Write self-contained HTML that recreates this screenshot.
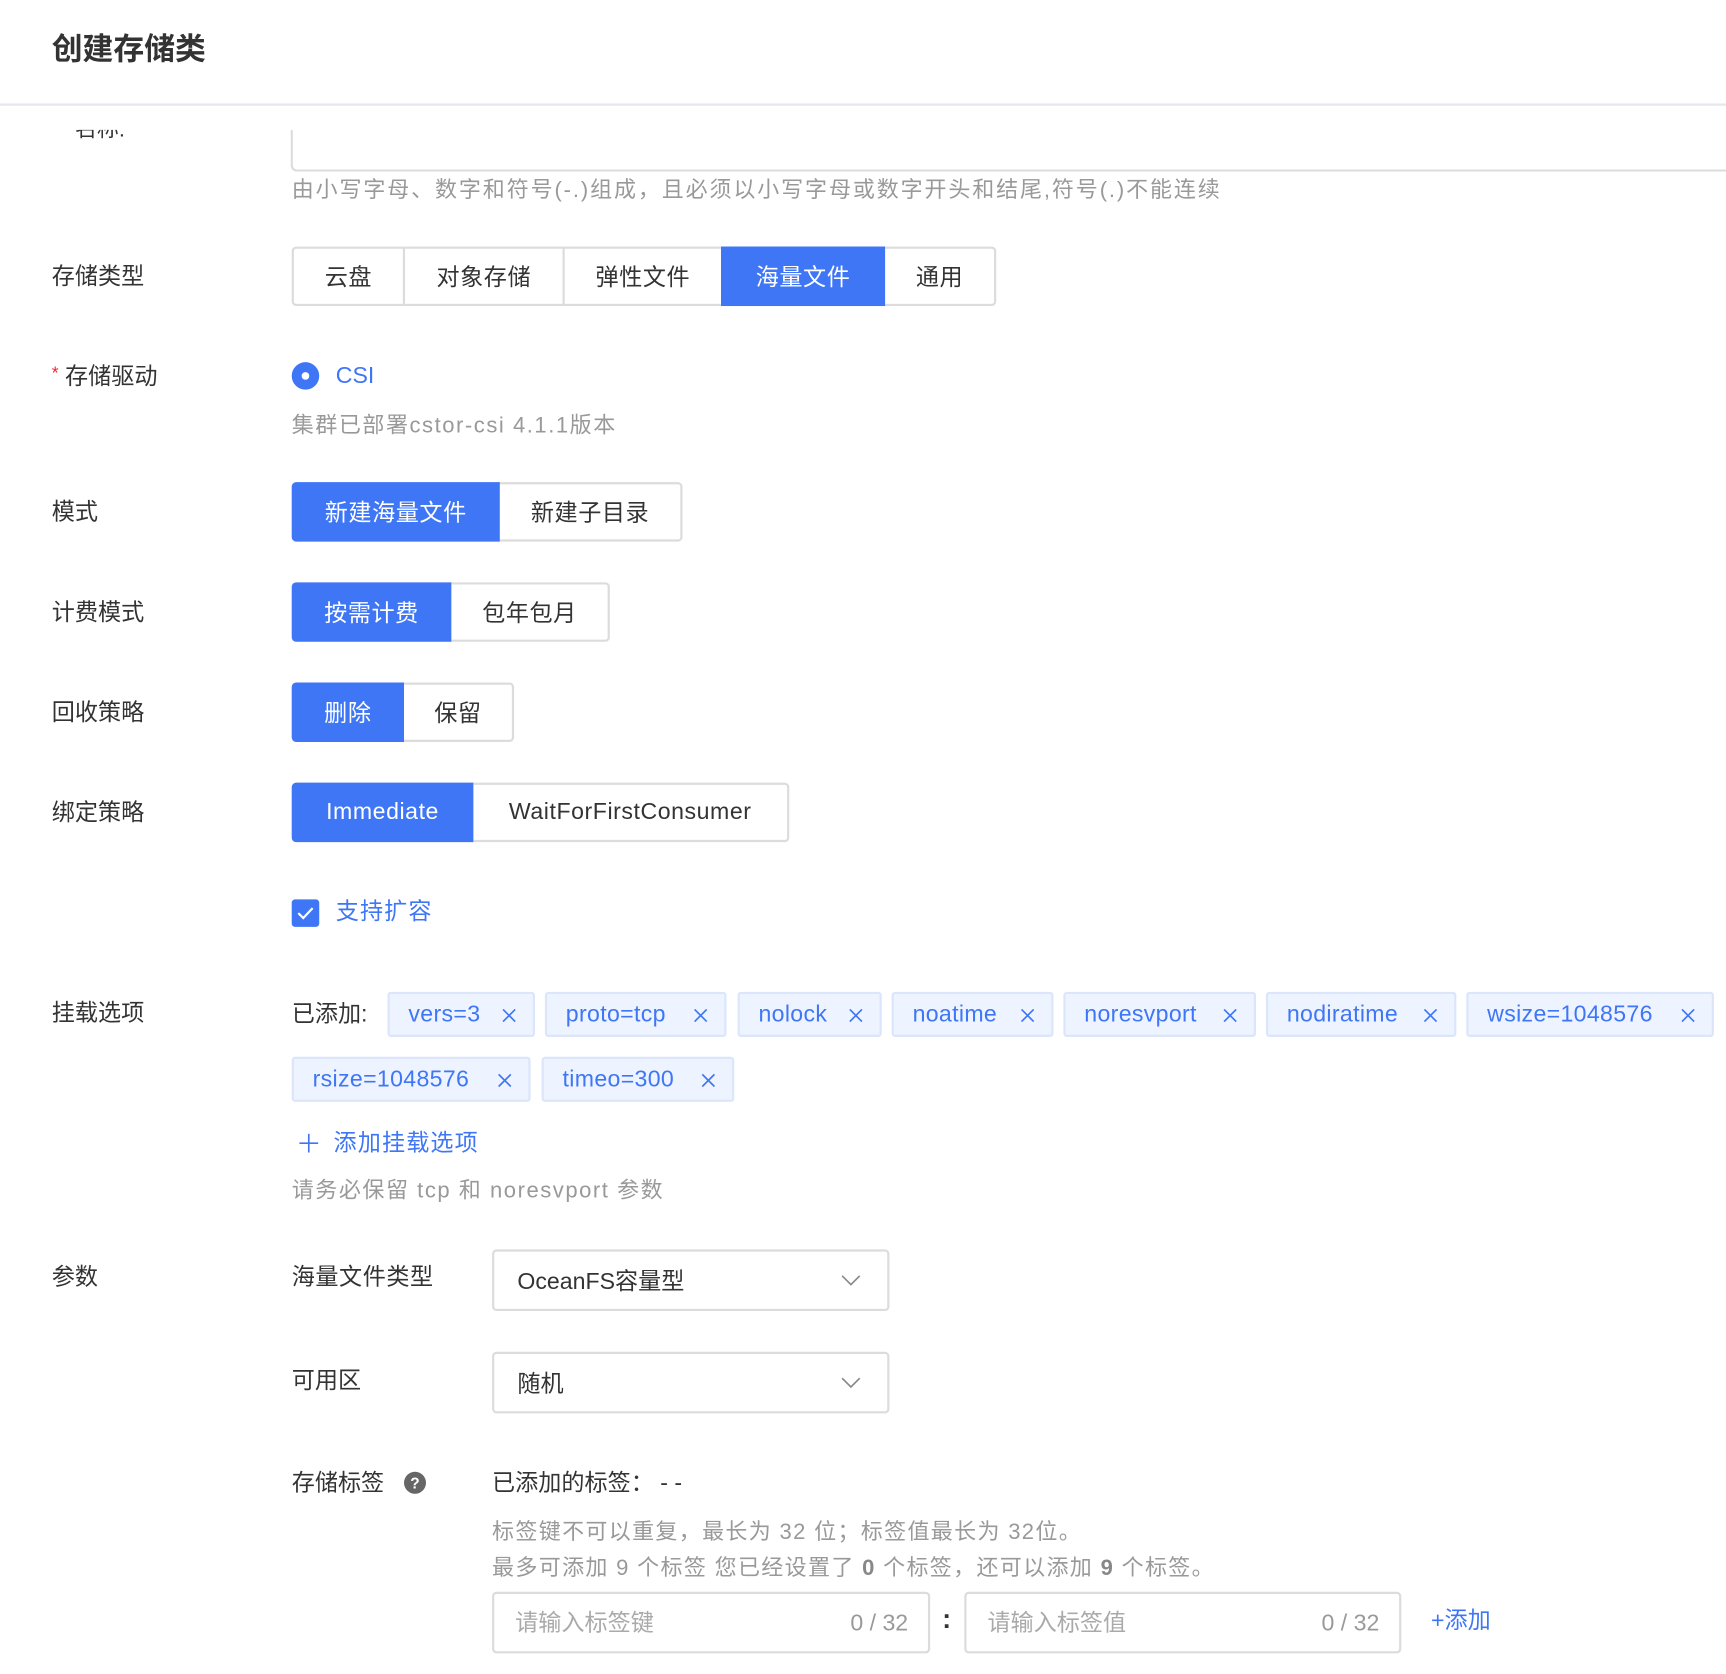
<!DOCTYPE html>
<html><head><meta charset="utf-8"><style>
html,body{margin:0;padding:0;background:#fff;overflow:hidden;width:1726px;height:1674px}
#w{position:absolute;left:0;top:0;width:1568px;height:1521px;transform:scale(1.1008);transform-origin:0 0;font-family:"Liberation Sans","Noto Sans CJK SC",sans-serif;color:#333;font-size:21px}
.a{position:absolute;white-space:nowrap;line-height:1}
.lab{position:absolute;left:47px;white-space:nowrap;font-size:21px;line-height:1;color:#333}
.hint{color:#999;font-size:20px;letter-spacing:1.4px}
.grp{position:absolute;left:265px;display:flex;height:54px}
.grp div{box-sizing:border-box;border:2px solid #dcdcdc;margin-left:-2px;display:flex;align-items:center;justify-content:center;font-size:21px;color:#333;background:#fff;letter-spacing:0.5px}
.grp div:first-child{margin-left:0;border-radius:4px 0 0 4px}
.grp div:last-child{border-radius:0 4px 4px 0}
.grp div.on{background:#3e76f6;border-color:#3e76f6;color:#fff;position:relative;z-index:1}
.tag{position:absolute;height:41px;box-sizing:border-box;background:#edf3ff;border:2px solid #dbe6fd;border-radius:3px;color:#3e76f6;font-size:21px;display:flex;align-items:center;padding-left:17px;letter-spacing:0.3px}
.tag svg{position:absolute;right:15px;top:13px}
.sel{position:absolute;left:447px;width:361px;height:56px;box-sizing:border-box;border:2px solid #dcdcdc;border-radius:4px;display:flex;align-items:center;padding-left:21px;font-size:21px;color:#333}
.sel svg{position:absolute;right:24px;top:20px}
.inp{position:absolute;top:1446px;height:56px;box-sizing:border-box;border:2px solid #dcdcdc;border-radius:4px;font-size:21px;color:#aaa}
</style></head><body><div id="w">
<div class="a" style="left:47px;top:31px;font-size:28px;font-weight:bold;color:#333">创建存储类</div>
<div class="a" style="left:0;top:94px;width:1568px;height:2px;background:#e4e7ec"></div>
<div class="a" style="left:68px;top:118px;height:10px;overflow:hidden;font-size:20px"><div style="margin-top:-10px">名称:</div></div>
<div class="a" style="left:264px;top:118px;width:1320px;height:38px;box-sizing:border-box;border:2px solid #dcdcdc;border-top:none;border-radius:0 0 0 6px"></div>
<div class="a hint" style="left:265px;top:163px;letter-spacing:1.7px">由小写字母、数字和符号(-.)组成，且必须以小写字母或数字开头和结尾,符号(.)不能连续</div>

<div class="lab" style="top:241px">存储类型</div>
<div class="grp" style="top:224px"><div style="width:103px">云盘</div><div style="width:147px">对象存储</div><div style="width:146px">弹性文件</div><div class="on" style="width:149px">海量文件</div><div style="width:103px">通用</div></div>

<div class="lab" style="top:332px"><span style="color:#f5222d;font-size:16px;vertical-align:top">*</span> 存储驱动</div>
<div class="a" style="left:265px;top:329px;width:25px;height:25px;border-radius:50%;background:#3e76f6"><div style="position:absolute;left:9px;top:9px;width:7px;height:7px;border-radius:50%;background:#fff"></div></div>
<div class="a" style="left:305px;top:331px;color:#3e76f6;font-size:21px">CSI</div>
<div class="a hint" style="left:265px;top:377px">集群已部署cstor-csi 4.1.1版本</div>

<div class="lab" style="top:455px">模式</div>
<div class="grp" style="top:438px"><div class="on" style="width:189px">新建海量文件</div><div style="width:168px">新建子目录</div></div>

<div class="lab" style="top:546px">计费模式</div>
<div class="grp" style="top:529px"><div class="on" style="width:145px">按需计费</div><div style="width:146px">包年包月</div></div>

<div class="lab" style="top:637px">回收策略</div>
<div class="grp" style="top:620px"><div class="on" style="width:102px">删除</div><div style="width:102px">保留</div></div>

<div class="lab" style="top:728px">绑定策略</div>
<div class="grp" style="top:711px"><div class="on" style="width:165px">Immediate</div><div style="width:289px">WaitForFirstConsumer</div></div>

<div class="a" style="left:265px;top:817px;width:25px;height:25px;border-radius:3px;background:#3e76f6"><svg width="25" height="25" viewBox="0 0 25 25"><path d="M6 12.5l4.5 4.5L19 8" fill="none" stroke="#fff" stroke-width="2"/></svg></div>
<div class="a" style="left:305px;top:818px;color:#3e76f6;font-size:21px;letter-spacing:1px">支持扩容</div>

<div class="lab" style="top:910px">挂载选项</div>
<div class="a" style="left:265px;top:911px;font-size:21px">已添加:</div>
<div class="tag" style="left:352px;top:901px;width:134px">vers=3<svg width="13" height="13"><path d="M1 1l11 11M12 1L1 12" stroke="#3e76f6" stroke-width="1.5"/></svg></div>
<div class="tag" style="left:495px;top:901px;width:165px">proto=tcp<svg width="13" height="13"><path d="M1 1l11 11M12 1L1 12" stroke="#3e76f6" stroke-width="1.5"/></svg></div>
<div class="tag" style="left:670px;top:901px;width:131px">nolock<svg width="13" height="13"><path d="M1 1l11 11M12 1L1 12" stroke="#3e76f6" stroke-width="1.5"/></svg></div>
<div class="tag" style="left:810px;top:901px;width:147px">noatime<svg width="13" height="13"><path d="M1 1l11 11M12 1L1 12" stroke="#3e76f6" stroke-width="1.5"/></svg></div>
<div class="tag" style="left:966px;top:901px;width:175px">noresvport<svg width="13" height="13"><path d="M1 1l11 11M12 1L1 12" stroke="#3e76f6" stroke-width="1.5"/></svg></div>
<div class="tag" style="left:1150px;top:901px;width:173px">nodiratime<svg width="13" height="13"><path d="M1 1l11 11M12 1L1 12" stroke="#3e76f6" stroke-width="1.5"/></svg></div>
<div class="tag" style="left:1332px;top:901px;width:225px">wsize=1048576<svg width="13" height="13"><path d="M1 1l11 11M12 1L1 12" stroke="#3e76f6" stroke-width="1.5"/></svg></div>
<div class="tag" style="left:265px;top:960px;width:217px">rsize=1048576<svg width="13" height="13"><path d="M1 1l11 11M12 1L1 12" stroke="#3e76f6" stroke-width="1.5"/></svg></div>
<div class="tag" style="left:492px;top:960px;width:175px">timeo=300<svg width="13" height="13"><path d="M1 1l11 11M12 1L1 12" stroke="#3e76f6" stroke-width="1.5"/></svg></div>
<svg class="a" style="left:271px;top:1029px" width="19" height="19"><path d="M9.5 1v17M1 9.5h17" stroke="#3e76f6" stroke-width="1.5"/></svg>
<div class="a" style="left:303px;top:1028px;color:#3e76f6;font-size:21px;letter-spacing:1px">添加挂载选项</div>
<div class="a hint" style="left:265px;top:1072px">请务必保留 tcp 和 noresvport 参数</div>

<div class="lab" style="top:1150px">参数</div>
<div class="a" style="left:265px;top:1150px;letter-spacing:0.5px">海量文件类型</div>
<div class="sel" style="top:1135px">OceanFS容量型<svg width="18" height="12"><path d="M1 2l8 8 8-8" fill="none" stroke="#888" stroke-width="1.5"/></svg></div>
<div class="a" style="left:265px;top:1244px">可用区</div>
<div class="sel" style="top:1228px">随机<svg width="18" height="12"><path d="M1 2l8 8 8-8" fill="none" stroke="#888" stroke-width="1.5"/></svg></div>

<div class="a" style="left:265px;top:1337px">存储标签</div>
<div class="a" style="left:367px;top:1337px;width:20px;height:20px;border-radius:50%;background:#666;color:#fff;font-size:14px;font-weight:bold;text-align:center;line-height:20px">?</div>
<div class="a" style="left:447px;top:1337px">已添加的标签：&nbsp;- -</div>
<div class="a hint" style="left:447px;top:1382px;letter-spacing:1.2px">标签键不可以重复，最长为 32 位；标签值最长为 32位。</div>
<div class="a hint" style="left:447px;top:1415px;letter-spacing:1.2px">最多可添加 9 个标签 您已经设置了 <b style="color:#888">0</b> 个标签，还可以添加 <b style="color:#888">9</b> 个标签。</div>
<div class="inp" style="left:447px;width:398px"><span class="a" style="left:19px;top:16px">请输入标签键</span><span class="a" style="right:18px;top:16px;color:#999">0 / 32</span></div>
<div class="a" style="left:856px;top:1460px;font-size:24px;font-weight:bold">:</div>
<div class="inp" style="left:876px;width:397px"><span class="a" style="left:19px;top:16px">请输入标签值</span><span class="a" style="right:18px;top:16px;color:#999">0 / 32</span></div>
<div class="a" style="left:1300px;top:1462px;color:#3e76f6;font-size:21px">+添加</div>
</div></body></html>
